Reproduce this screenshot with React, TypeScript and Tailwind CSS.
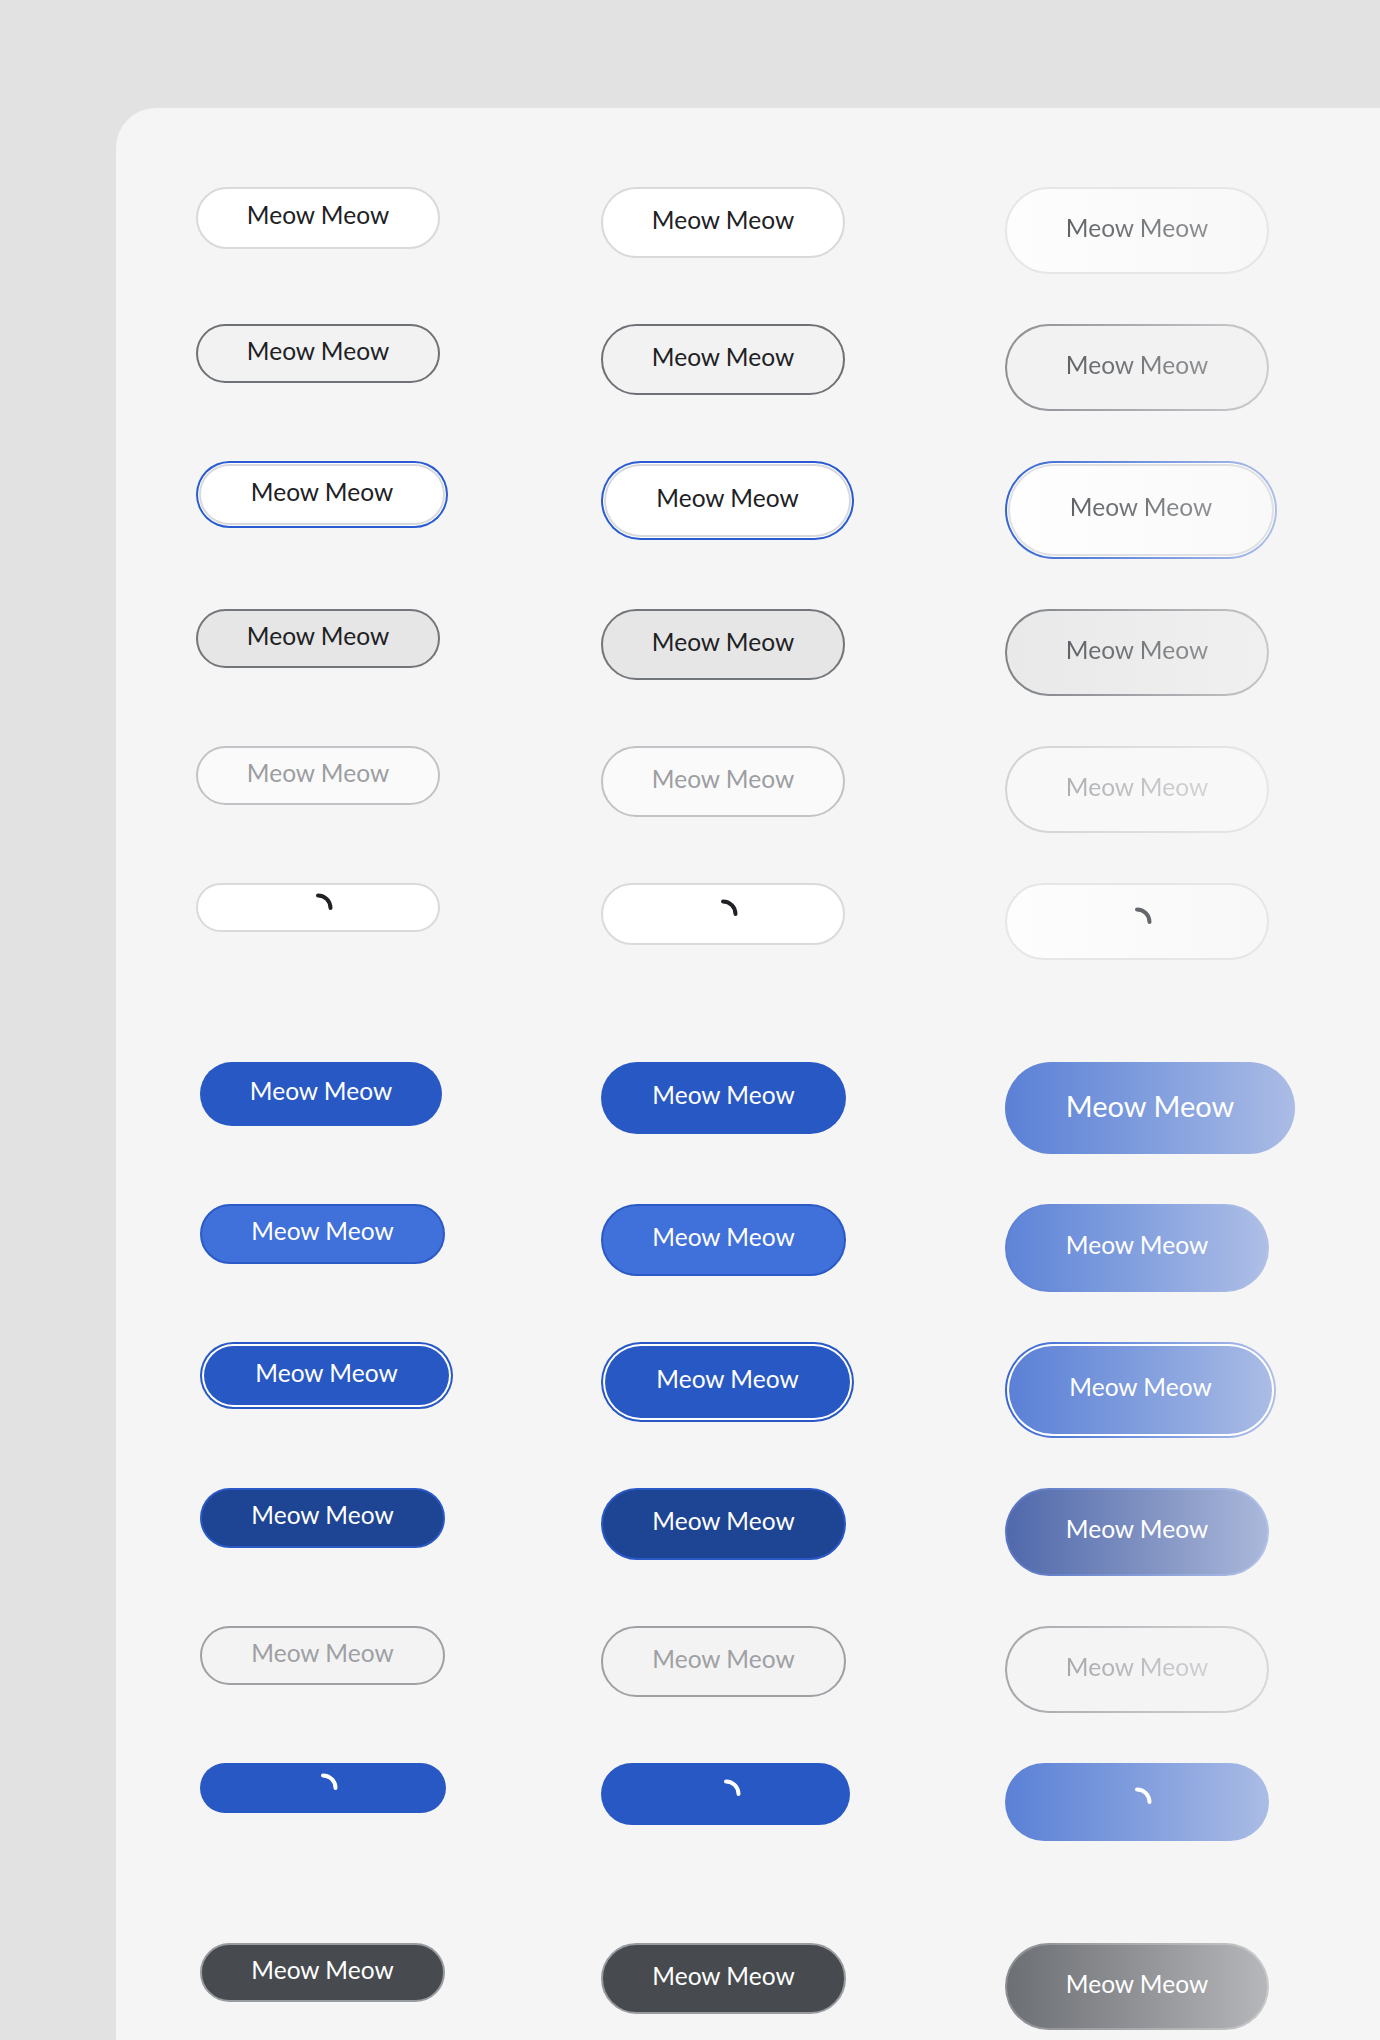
import type { ReactNode } from 'react';

type Btn = {
  box: string;
  layers?: string[];
  face: string;
  label?: string;
  spin?: string;
};

const dark = 'text-[24.5px] text-[#202124]';
const white = 'text-[24.5px] text-white';
const fadedText = 'text-[24.5px] bg-linear-to-r from-[#5f6266] to-[#8f9194] bg-clip-text text-transparent';

function Spinner({ className }: { className?: string }) {
  return (
    <svg width="32" height="32" viewBox="0 0 32 32" className={className}>
      <path
        d="M16 3.5 A12.5 12.5 0 0 1 28.5 16"
        fill="none"
        stroke="currentColor"
        strokeWidth="4"
        strokeLinecap="round"
      />
    </svg>
  );
}

function Button({ b }: { b: Btn }) {
  let node: ReactNode = (
    <div className={`flex h-full w-full items-center justify-center rounded-full ${b.face}`}>
      {b.label ? (
        <span className={`pb-[5px] leading-none ${b.label}`}>Meow Meow</span>
      ) : (
        <Spinner className={b.spin} />
      )}
    </div>
  );
  for (const l of [...(b.layers ?? [])].reverse()) {
    node = <div className={`h-full w-full rounded-full ${l}`}>{node}</div>;
  }
  return (
    <button type="button" className={`block shrink-0 rounded-full ${b.box}`}>
      {node}
    </button>
  );
}

const neutral: Btn[][] = [
  [
    { box: 'w-[244px] h-[62px]', face: 'bg-white border-2 border-[#d9d9dc]', label: dark },
    { box: 'w-[244px] h-[71px]', face: 'bg-white border-2 border-[#d9d9dc]', label: dark },
    {
      box: 'w-[264px] h-[87px]',
      face: 'border-2 border-[#e6e6e7] bg-linear-to-r from-[#fdfdfd] to-[#f8f8f8]',
      label: fadedText,
    },
  ],
  [
    { box: 'w-[244px] h-[59px]', face: 'bg-[#f2f2f2] border-2 border-[#6e7175]', label: dark },
    { box: 'w-[244px] h-[71px]', face: 'bg-[#f2f2f2] border-2 border-[#6e7175]', label: dark },
    {
      box: 'w-[264px] h-[87px] p-[2px] bg-linear-to-r from-[#8c8f93] to-[#cbcccf]',
      face: 'bg-[#f2f2f2]',
      label: fadedText,
    },
  ],
  [
    {
      box: 'w-[252px] h-[67px] p-[2px] bg-[#2a5bd0]',
      layers: ['p-[1px] bg-white', 'p-[2px] bg-[#d8d9dd]'],
      face: 'bg-white',
      label: dark,
    },
    {
      box: 'w-[253px] h-[79px] p-[2px] bg-[#2a5bd0]',
      layers: ['p-[1px] bg-white', 'p-[2px] bg-[#d8d9dd]'],
      face: 'bg-white',
      label: dark,
    },
    {
      box: 'w-[272px] h-[98px] p-[2px] bg-linear-to-r from-[#3563d2] to-[#aebfe8]',
      layers: ['p-[1px] bg-[#fdfdfd]', 'p-[2px] bg-[#e1e1e4]'],
      face: 'bg-linear-to-r from-[#fefefe] to-[#f9f9f9]',
      label: fadedText,
    },
  ],
  [
    { box: 'w-[244px] h-[59px]', face: 'bg-[#e6e6e6] border-2 border-[#727579]', label: dark },
    { box: 'w-[244px] h-[71px]', face: 'bg-[#e6e6e6] border-2 border-[#727579]', label: dark },
    {
      box: 'w-[264px] h-[87px] p-[2px] bg-linear-to-r from-[#7f8286] to-[#c6c7c9]',
      face: 'bg-linear-to-r from-[#e9e9e9] to-[#f0f0f0]',
      label: fadedText,
    },
  ],
  [
    {
      box: 'w-[244px] h-[59px]',
      face: 'bg-[#fafafa] border-2 border-[#c2c3c6]',
      label: 'text-[24.5px] text-[#9c9ea2]',
    },
    {
      box: 'w-[244px] h-[71px]',
      face: 'bg-[#fafafa] border-2 border-[#c2c3c6]',
      label: 'text-[24.5px] text-[#9c9ea2]',
    },
    {
      box: 'w-[264px] h-[87px] p-[2px] bg-linear-to-r from-[#d2d3d5] to-[#e7e7e8]',
      face: 'bg-[#f8f8f8]',
      label: 'text-[24.5px] bg-linear-to-r from-[#adafb2] to-[#d3d4d6] bg-clip-text text-transparent',
    },
  ],
  [
    { box: 'w-[244px] h-[49px]', face: 'bg-white border-2 border-[#dadadd]', spin: 'text-[#202124]' },
    { box: 'w-[244px] h-[62px]', face: 'bg-white border-2 border-[#dadadd]', spin: 'text-[#202124]' },
    {
      box: 'w-[264px] h-[77px]',
      face: 'border-2 border-[#e6e6e7] bg-linear-to-r from-[#fdfdfd] to-[#f8f8f8]',
      spin: 'text-[#63676b]',
    },
  ],
];

const blueGrad = 'bg-linear-to-r from-[#5b80d6] via-[#809ddd] to-[#abbce5]';

const primary: Btn[][] = [
  [
    { box: 'ml-[4px] w-[242px] h-[64px]', face: 'bg-[#2858c4]', label: white },
    { box: 'w-[245px] h-[72px]', face: 'bg-[#2858c4]', label: white },
    { box: 'w-[290px] h-[92px]', face: blueGrad, label: 'text-[29px] text-white' },
  ],
  [
    { box: 'ml-[4px] w-[245px] h-[60px]', face: 'bg-[#4070d9] border-2 border-[#2b5ac7]', label: white },
    { box: 'w-[245px] h-[72px]', face: 'bg-[#4070d9] border-2 border-[#2b5ac7]', label: white },
    {
      box: 'w-[264px] h-[88px] p-[2px] bg-linear-to-r from-[#5a7fd5] to-[#b2c1e7]',
      face: 'bg-linear-to-r from-[#5f84d8] via-[#83a0de] to-[#aebee6]',
      label: white,
    },
  ],
  [
    {
      box: 'ml-[4px] w-[253px] h-[67px] p-[2px] bg-[#2858c4]',
      layers: ['p-[2px] bg-white'],
      face: 'bg-[#2858c4]',
      label: white,
    },
    {
      box: 'w-[253px] h-[80px] p-[2px] bg-[#2858c4]',
      layers: ['p-[2px] bg-white'],
      face: 'bg-[#2858c4]',
      label: white,
    },
    {
      box: 'w-[271px] h-[96px] p-[2px] bg-linear-to-r from-[#3a66d2] to-[#b0c0e8]',
      layers: ['p-[2px] bg-white'],
      face: blueGrad,
      label: white,
    },
  ],
  [
    { box: 'ml-[4px] w-[245px] h-[60px]', face: 'bg-[#1e4494] border-2 border-[#2a59c6]', label: white },
    { box: 'w-[245px] h-[72px]', face: 'bg-[#1e4494] border-2 border-[#2a59c6]', label: white },
    {
      box: 'w-[264px] h-[88px] p-[2px] bg-linear-to-r from-[#5874c2] to-[#b3c2e8]',
      face: 'bg-linear-to-r from-[#5069ab] via-[#7d8fc0] to-[#abb8db]',
      label: white,
    },
  ],
  [
    {
      box: 'ml-[4px] w-[245px] h-[59px]',
      face: 'bg-[#f3f3f3] border-2 border-[#9ea0a4]',
      label: 'text-[24.5px] text-[#9ea0a4]',
    },
    {
      box: 'w-[245px] h-[71px]',
      face: 'bg-[#f3f3f3] border-2 border-[#9ea0a4]',
      label: 'text-[24.5px] text-[#9ea0a4]',
    },
    {
      box: 'w-[264px] h-[87px] p-[2px] bg-linear-to-r from-[#a5a7ab] to-[#d7d8da]',
      face: 'bg-[#f4f4f4]',
      label: 'text-[24.5px] bg-linear-to-r from-[#a5a7ab] to-[#d0d1d4] bg-clip-text text-transparent',
    },
  ],
  [
    { box: 'ml-[4px] w-[246px] h-[50px]', face: 'bg-[#2858c4]', spin: 'text-white' },
    { box: 'w-[249px] h-[62px]', face: 'bg-[#2858c4]', spin: 'text-white' },
    { box: 'w-[264px] h-[78px]', face: blueGrad, spin: 'text-white' },
  ],
];

const neutralDark: Btn[][] = [
  [
    { box: 'ml-[4px] w-[245px] h-[59px]', face: 'bg-[#474b4f] border-2 border-[#989b9f]', label: white },
    { box: 'w-[245px] h-[71px]', face: 'bg-[#474b4f] border-2 border-[#989b9f]', label: white },
    {
      box: 'w-[264px] h-[87px] p-[2px] bg-linear-to-r from-[#8a8d91] to-[#c8c9cb]',
      face: 'bg-linear-to-r from-[#6c6f73] via-[#909296] to-[#b5b7ba]',
      label: white,
    },
  ],
];

function Section({ rows }: { rows: Btn[][] }) {
  return (
    <div className="flex flex-col gap-[50px]">
      {rows.map((row, i) => (
        <div key={i} className="grid grid-cols-[405px_404px_auto] items-start">
          {row.map((b, j) => (
            <div key={j}>
              <Button b={b} />
            </div>
          ))}
        </div>
      ))}
    </div>
  );
}

export default function App() {
  return (
    <div className="h-[2040px] overflow-hidden bg-[#e2e2e2] pl-[116px] pt-[108px] font-['Lato','Liberation_Sans',sans-serif]">
      <div className="h-full rounded-tl-[40px] bg-[#f5f5f5] pl-[80px] pt-[79px]">
        <div className="flex flex-col gap-[102px]">
          <Section rows={neutral} />
          <Section rows={primary} />
          <Section rows={neutralDark} />
        </div>
      </div>
    </div>
  );
}
